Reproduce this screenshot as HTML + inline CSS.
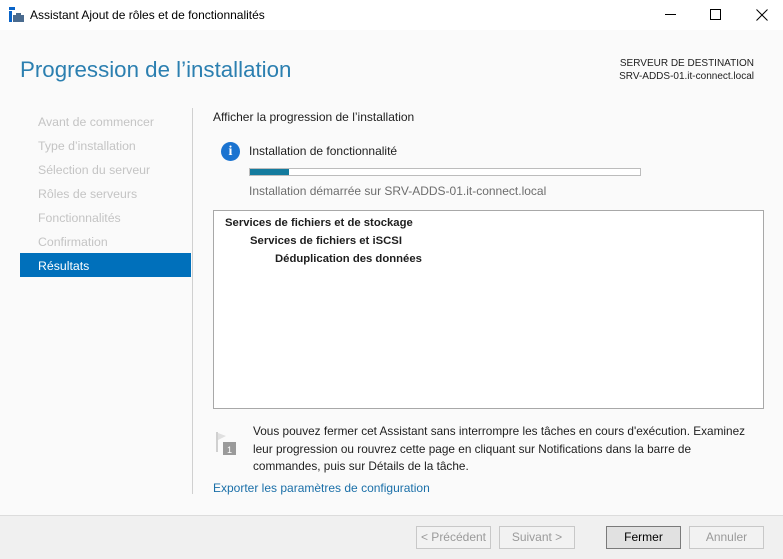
<html><head><style>
body{margin:0;width:783px;height:558px;position:relative;background:#fafafa;font-family:"Liberation Sans",sans-serif;font-size:11.8px;color:#1e1e1e;overflow:hidden}
.a{position:absolute;white-space:nowrap}
.nav{left:38px;color:#c4c4c4;font-size:12.3px}
.btn{position:absolute;top:526px;height:21px;border:1px solid #c8c8c8;background:#f2f2f2;color:#9a9a9a;text-align:center;line-height:21px;font-size:12px}
</style></head><body>
<div class="a" style="left:0;top:0;width:783px;height:30px;background:#fff"></div>
<svg class="a" style="left:9px;top:7px" width="16" height="16"><rect x="0" y="0" width="6" height="3" fill="#0a64c8"/><rect x="0" y="4" width="3" height="11" fill="#0a64c8"/><rect x="4" y="8" width="11" height="7" fill="#4a6b8f"/><rect x="7" y="6" width="5" height="2" fill="#4a6b8f"/></svg>
<div class="a" style="left:30px;top:8px;font-size:12px;color:#000">Assistant Ajout de rôles et de fonctionnalités</div>
<div class="a" style="left:665px;top:14px;width:11px;height:1px;background:#000"></div>
<div class="a" style="left:710px;top:9px;width:9px;height:9px;border:1px solid #000"></div>
<svg class="a" style="left:756px;top:9px" width="12" height="12"><path d="M0.5 0.5L11.5 11.5M11.5 0.5L0.5 11.5" stroke="#000" stroke-width="1"/></svg>
<div class="a" style="left:20px;top:57px;font-size:22.3px;color:#2b7fb0">Progression de l’installation</div>
<div class="a" style="left:560px;top:57px;width:194px;text-align:right;font-size:10px;line-height:13px;color:#1e1e1e">SERVEUR DE DESTINATION<br>SRV-ADDS-01.it-connect.local</div>
<div class="a nav" style="top:115px">Avant de commencer</div>
<div class="a nav" style="top:139px">Type d’installation</div>
<div class="a nav" style="top:163px">Sélection du serveur</div>
<div class="a nav" style="top:187px">Rôles de serveurs</div>
<div class="a nav" style="top:211px">Fonctionnalités</div>
<div class="a nav" style="top:235px">Confirmation</div>
<div class="a" style="left:20px;top:253px;width:171px;height:24px;background:#0070bb"></div>
<div class="a nav" style="top:259px;color:#fff">Résultats</div>
<div class="a" style="left:192px;top:108px;width:1px;height:386px;background:#d0d0d0"></div>
<div class="a" style="left:213px;top:110px;font-size:12px">Afficher la progression de l’installation</div>
<div class="a" style="left:221px;top:142px;width:19px;height:19px;border-radius:50%;background:#1a73d0;color:#fff;font-weight:bold;text-align:center;line-height:19px;font-size:14px;font-family:'Liberation Serif',serif">i</div>
<div class="a" style="left:249px;top:144px;font-size:12px">Installation de fonctionnalité</div>
<div class="a" style="left:249px;top:168px;width:390px;height:6px;border:1px solid #bcbcbc;background:#fff"></div>
<div class="a" style="left:250px;top:169px;width:39px;height:6px;background:#137b9e"></div>
<div class="a" style="left:249px;top:184px;font-size:12px;color:#6d6d6d">Installation démarrée sur SRV-ADDS-01.it-connect.local</div>
<div class="a" style="left:213px;top:210px;width:549px;height:197px;border:1px solid #a8a8a8;background:#fff"></div>
<div class="a" style="left:225px;top:217px;font-weight:bold;font-size:11.3px">Services de fichiers et de stockage</div>
<div class="a" style="left:250px;top:235px;font-weight:bold;font-size:11.3px">Services de fichiers et iSCSI</div>
<div class="a" style="left:275px;top:253px;font-weight:bold;font-size:11.3px">Déduplication des données</div>
<svg class="a" style="left:214px;top:432px" width="26" height="26"><rect x="2" y="0" width="2" height="20" fill="#d0d0d0"/><polygon points="4,1 12,4 4,8" fill="#e0e0e0"/><rect x="9" y="10" width="13" height="13" fill="#9a9a9a"/><text x="13" y="21" font-size="9" fill="#fff" font-family="Liberation Sans">1</text></svg>
<div class="a" style="left:253px;top:423px;font-size:11.8px;line-height:17.5px">Vous pouvez fermer cet Assistant sans interrompre les tâches en cours d'exécution. Examinez<br>leur progression ou rouvrez cette page en cliquant sur Notifications dans la barre de<br>commandes, puis sur Détails de la tâche.</div>
<div class="a" style="left:213px;top:481px;font-size:12px;color:#1a6fa8">Exporter les paramètres de configuration</div>
<div class="a" style="left:0;top:515px;width:783px;height:43px;background:#f0f0f0;border-top:1px solid #dcdcdc"></div>
<div class="btn" style="left:416px;width:73px">&lt; Précédent</div>
<div class="btn" style="left:499px;width:74px">Suivant &gt;</div>
<div class="btn" style="left:606px;width:73px;border-color:#7a7a7a;background:#e1e1e1;color:#000">Fermer</div>
<div class="btn" style="left:689px;width:73px">Annuler</div>
</body></html>
